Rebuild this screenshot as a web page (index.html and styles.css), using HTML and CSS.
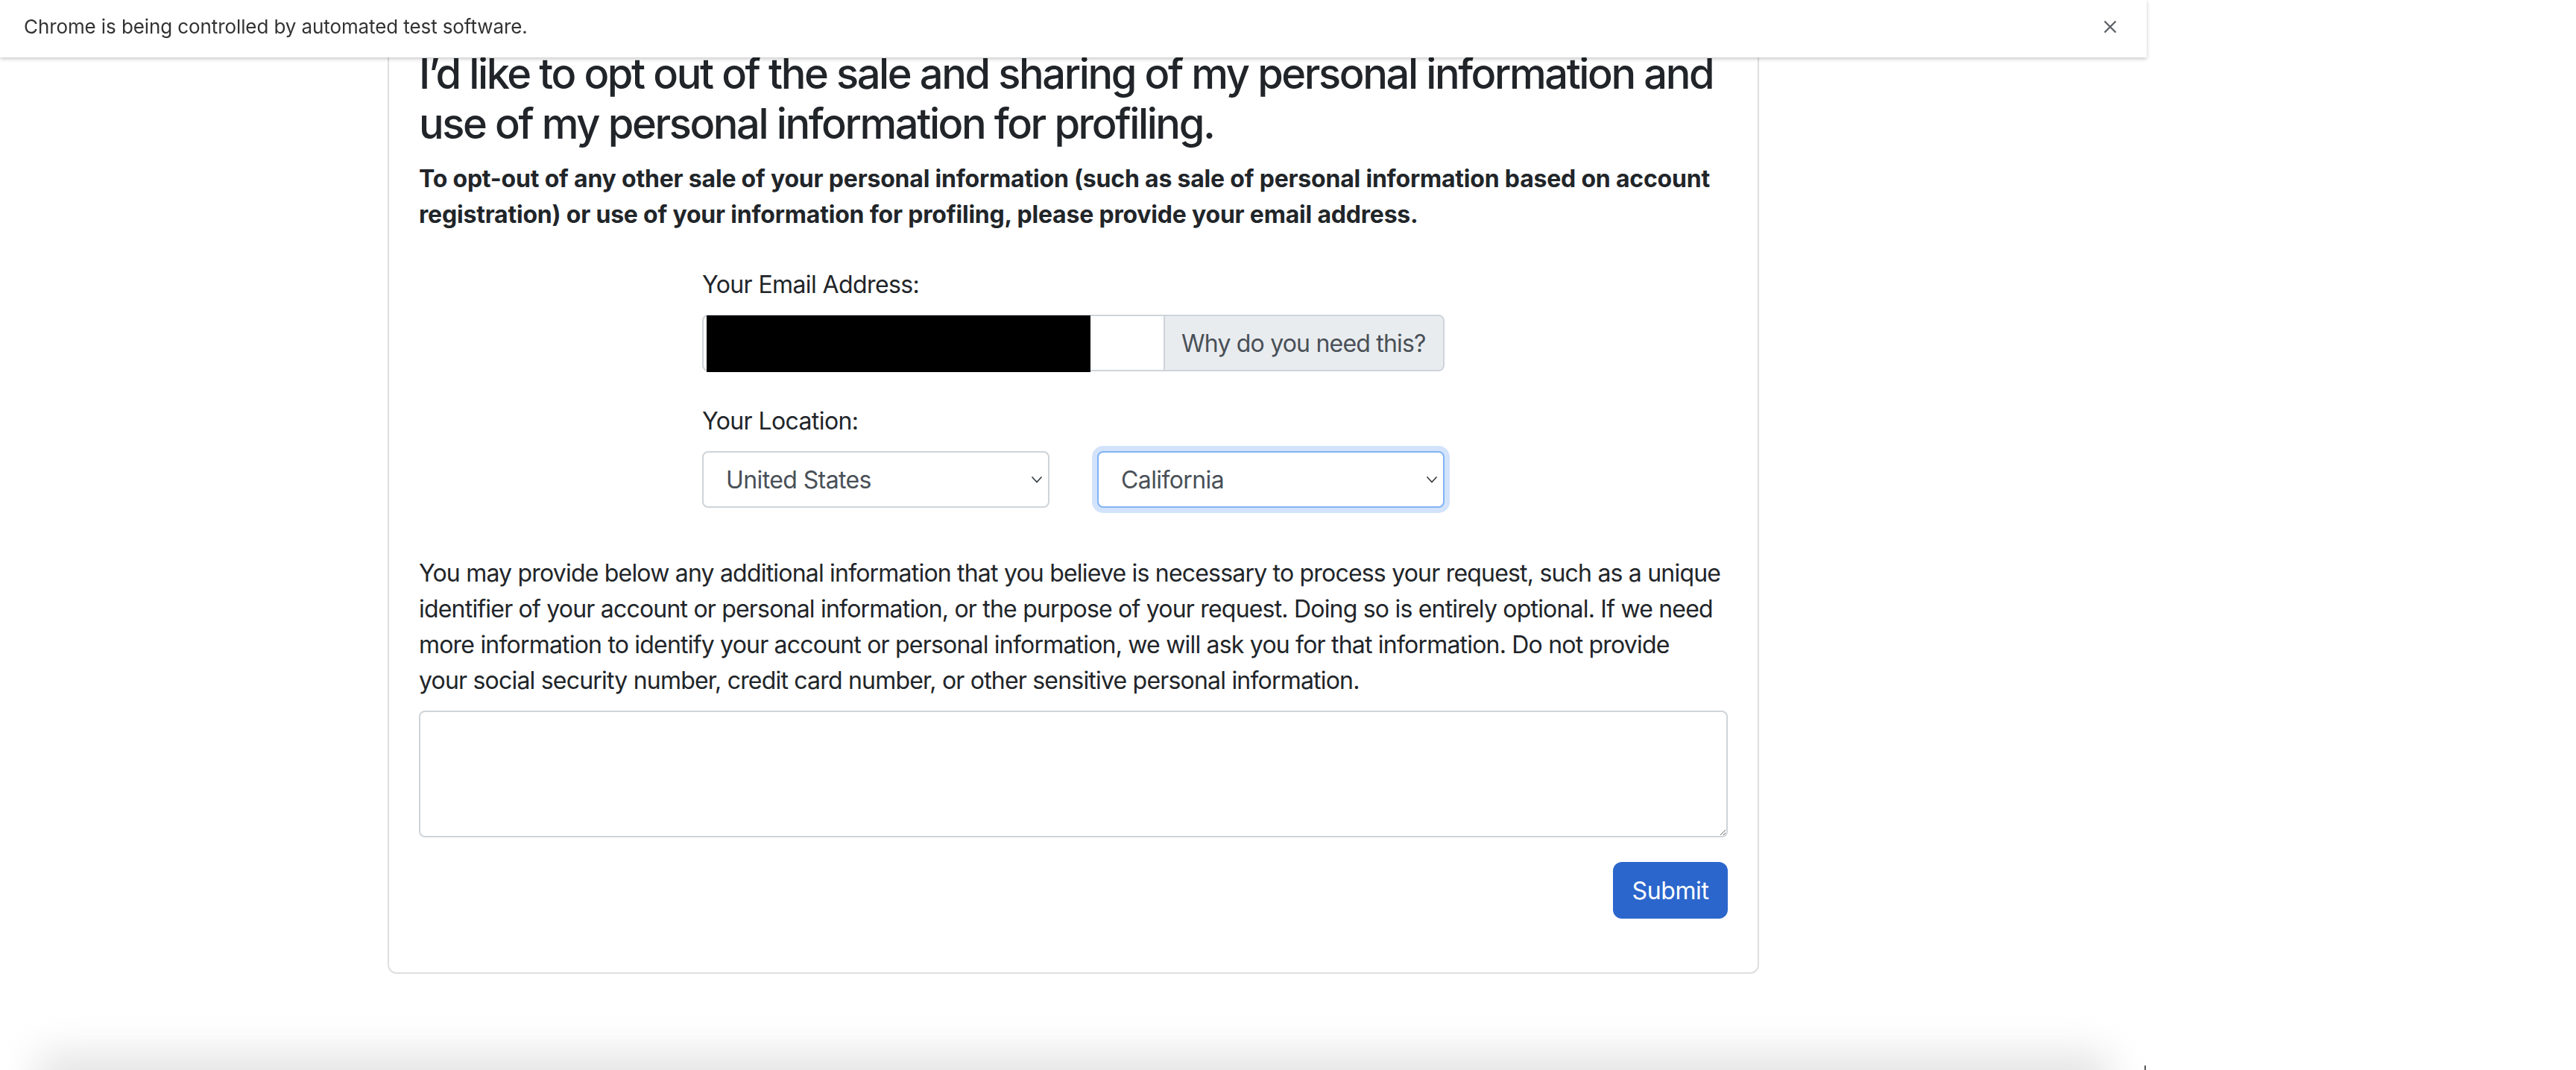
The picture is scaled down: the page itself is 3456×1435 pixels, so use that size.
FILE: index.html
```html
<!DOCTYPE html>
<html lang="en">
<head>
<meta charset="utf-8">
<title>Opt out</title>
<link rel="stylesheet" href="styles.css">
</head>
<body>
<div class="infobar">
  <span class="infobar-text">Chrome is being controlled by automated test software.</span>
  <svg class="infobar-close" width="18" height="18" viewBox="0 0 18 18"><path d="M1.5 1.5L16.5 16.5M16.5 1.5L1.5 16.5"/></svg>
</div>
<div class="window">
  <div class="card">
    <h3 class="title">I’d like to opt out of the sale and sharing of my personal information and use of my personal information for profiling.</h3>
    <p class="intro">To opt-out of any other sale of your personal information (such as sale of personal information based on account registration) or use of your information for profiling, please provide your email address.</p>
    <div class="form">
      <div class="field field-email">
        <label class="label">Your Email Address:</label>
        <div class="input-group">
          <div class="input-wrap">
            <input class="input" type="text">
            <span class="redact"></span>
          </div>
          <span class="addon">Why do you need this?</span>
        </div>
      </div>
      <div class="field">
        <label class="label">Your Location:</label>
        <div class="selects">
          <div class="select-wrap">
            <select class="select"><option>United States</option></select>
            <svg class="chev" width="16" height="10" viewBox="0 0 16 10"><path d="M1.5 1.5L8 8.5L14.5 1.5"/></svg>
          </div>
          <div class="select-wrap">
            <select class="select select-focus"><option>California</option></select>
            <svg class="chev" width="16" height="10" viewBox="0 0 16 10"><path d="M1.5 1.5L8 8.5L14.5 1.5"/></svg>
          </div>
        </div>
      </div>
    </div>
    <p class="note">You may provide below any additional information that you believe is necessary to process your request, such as a unique identifier of your account or personal information, or the purpose of your request. Doing so is entirely optional. If we need more information to identify your account or personal information, we will ask you for that information. Do not provide<br>your social security number, credit card number, or other sensitive personal information.</p>
    <textarea class="textarea"></textarea>
    <div class="actions">
      <button class="btn" type="button">Submit</button>
    </div>
  </div>
  <div class="window-shadow"></div>
  <div class="window-edge"></div>
</div>
</body>
</html>
```

FILE: styles.css
```css
html, body {
  margin: 0;
  padding: 0;
  background: #ffffff;
  height: 1435px;
  overflow: hidden;
}

body {
  font-family: "Inter", "Liberation Sans", sans-serif;
  color: #212529;
  position: relative;
}

.infobar {
  position: fixed;
  top: 0;
  left: 0;
  width: 2880px;
  height: 77px;
  background: #ffffff;
  box-shadow: 0 2px 5px rgba(0, 0, 0, 0.22);
  z-index: 10;
  display: flex;
  align-items: center;
  justify-content: space-between;
  box-sizing: border-box;
  padding: 0 40px 6px 32px;
}

.infobar-text {
  font-size: 26px;
  color: #333333;
  letter-spacing: -0.1px;
}

.infobar-close {
  stroke: #5f6368;
  stroke-width: 2.4;
  fill: none;
}

.window {
  width: 2880px;
  height: 1435px;
  position: relative;
  padding-top: 24px;
  box-sizing: border-box;
  overflow: hidden;
}

.card {
  width: 1840px;
  margin: 0 auto;
  box-sizing: border-box;
  border: 2px solid #dfdfdf;
  border-radius: 12px;
  padding: 40px 40px 40px;
  background: #ffffff;
}

.title {
  font-size: 56px;
  line-height: 1.2;
  font-weight: 500;
  margin: 0 0 16px;
  letter-spacing: -2.4px;
}

.intro {
  font-size: 32px;
  line-height: 48px;
  font-weight: 700;
  margin: 0 0 46px;
  letter-spacing: -0.2px;
}

.form {
  width: 996px;
  margin: 0 auto;
}

.label {
  display: block;
  font-size: 32px;
  line-height: 48px;
  margin-bottom: 16px;
  letter-spacing: -0.6px;
}

.field-email {
  margin-bottom: 43px;
}

.input-group {
  display: flex;
  height: 76px;
}

.input-wrap {
  position: relative;
  flex: 1 1 auto;
}

.input {
  display: block;
  width: 100%;
  height: 76px;
  box-sizing: border-box;
  border: 2px solid #ced4da;
  border-right: 0;
  border-radius: 8px 0 0 8px;
  background: #ffffff;
  margin: 0;
  padding: 0 24px;
  font: inherit;
  font-size: 32px;
}

.redact {
  position: absolute;
  left: 6px;
  top: 1px;
  width: 515px;
  height: 76px;
  background: #000000;
}

.addon {
  flex: 0 0 auto;
  width: 377px;
  box-sizing: border-box;
  height: 76px;
  display: flex;
  align-items: center;
  padding: 0 22px;
  background: #e9ecef;
  border: 2px solid #ced4da;
  border-radius: 0 8px 8px 0;
  font-size: 32px;
  color: #495057;
  white-space: nowrap;
  letter-spacing: -0.8px;
}

.selects {
  display: grid;
  grid-template-columns: 1fr 1fr;
  column-gap: 64px;
}

.select-wrap {
  position: relative;
}

.select {
  display: block;
  width: 100%;
  height: 76px;
  box-sizing: border-box;
  -webkit-appearance: none;
  appearance: none;
  border: 2px solid #ced4da;
  border-radius: 8px;
  background: #ffffff;
  padding: 0 40px 0 30px;
  font: inherit;
  font-size: 32px;
  letter-spacing: -0.6px;
  color: #495057;
  margin: 0;
  outline: none;
}

.select-focus {
  border-color: #80b4f5;
  box-shadow: 0 0 0 7px #d2e3fb;
}

.chev {
  position: absolute;
  right: 9px;
  top: 33px;
  fill: none;
  stroke: #343a40;
  stroke-width: 1.6;
  pointer-events: none;
}

.note {
  font-size: 32px;
  line-height: 48px;
  margin: 64px 0 16px;
  letter-spacing: -0.8px;
}

.textarea {
  display: block;
  width: 100%;
  height: 170px;
  box-sizing: border-box;
  border: 2px solid #ced4da;
  border-radius: 8px;
  margin: 0;
  padding: 12px 24px;
  font: inherit;
  resize: vertical;
}

.actions {
  display: flex;
  justify-content: flex-end;
  margin-top: 33px;
  margin-bottom: 32px;
}

.btn {
  height: 76px;
  width: 154px;
  border: 0;
  border-radius: 12px;
  background: #2b66cc;
  color: #ffffff;
  font: inherit;
  font-size: 32px;
  letter-spacing: -0.4px;
  padding: 0;
}

.window-shadow {
  position: absolute;
  left: 50px;
  top: 1412px;
  width: 2780px;
  height: 140px;
  background: #e4e4e4;
  filter: blur(26px);
}

.window-edge {
  position: absolute;
  right: 1px;
  bottom: 0;
  width: 2px;
  height: 6px;
  background: #555555;
}
```
